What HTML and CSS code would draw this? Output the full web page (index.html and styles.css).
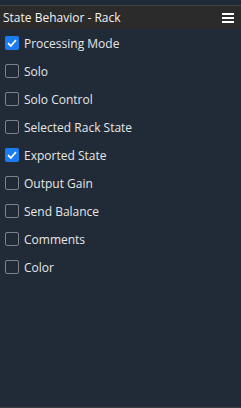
FILE: index.html
```html
<!DOCTYPE html>
<html lang="en">
<head>
    <meta charset="UTF-8">
    <meta name="viewport" content="width=device-width, initial-scale=1.0">
    <title>State Behavior - Rack</title>
    <link rel="stylesheet" href="styles.css">
</head>
<body>
    <div class="panel">
        <div class="panel-header">
            <span class="panel-title">State Behavior - Rack</span>
            <span class="menu-icon">
                <svg width="12" height="10" viewBox="0 0 12 10"><rect x="0" y="0" width="12" height="2" fill="#fff"/><rect x="0" y="4" width="12" height="2" fill="#fff"/><rect x="0" y="8" width="12" height="2" fill="#fff"/></svg>
            </span>
        </div>

        <ul class="option-list">
            <li><label class="option"><span class="box checked"></span>Processing Mode</label></li>
            <li><label class="option"><span class="box"></span>Solo</label></li>
            <li><label class="option"><span class="box"></span>Solo Control</label></li>
            <li><label class="option"><span class="box"></span>Selected Rack State</label></li>
            <li><label class="option"><span class="box checked"></span>Exported State</label></li>
            <li><label class="option"><span class="box"></span>Output Gain</label></li>
            <li><label class="option"><span class="box"></span>Send Balance</label></li>
            <li><label class="option"><span class="box"></span>Comments</label></li>
            <li><label class="option"><span class="box"></span>Color</label></li>
        </ul>
    </div>
</body>
</html>
```

FILE: styles.css
```css
html, body {
    height: 100%;
}

body {
    margin: 0;
    background-color: #1f2a38;
    font-family: "Open Sans", "Noto Sans", sans-serif;
    font-size: 12px;
    color: #e6e6e6;
}

.panel {
    box-sizing: border-box;
    margin-top: 5px;
    height: calc(100% - 5px);
    border-top: 1px solid #3c3f44;
    border-bottom: 1px solid #3c3f44;
    background-color: #212b38;
}

.panel-header {
    display: flex;
    align-items: center;
    justify-content: space-between;
    height: 23px;
    padding: 0 7px 0 3px;
    background-color: #2b2b2b;
}

.panel-title {
    color: #f2f2f2;
}

.menu-icon {
    display: flex;
}

.option-list {
    list-style: none;
    margin: 0;
    padding: 0;
}

.option {
    display: flex;
    align-items: center;
    height: 28px;
    padding-left: 5px;
}

.box {
    box-sizing: border-box;
    width: 14px;
    height: 14px;
    margin-right: 5px;
    border: 1px solid #7d8288;
    border-radius: 2px;
}

.box.checked {
    border: none;
    background-color: #1a7cf0;
    background-image: url("data:image/svg+xml,%3Csvg xmlns='http://www.w3.org/2000/svg' width='14' height='14'%3E%3Cpath d='M3 7.2l2.8 2.8L11 4' fill='none' stroke='white' stroke-width='1.8'/%3E%3C/svg%3E");
}
```
